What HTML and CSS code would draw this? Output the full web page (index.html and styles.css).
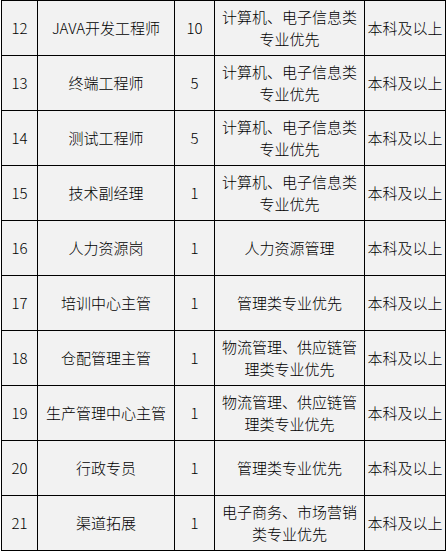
FILE: index.html
```html
<!DOCTYPE html>
<html lang="zh-CN">
<head>
<meta charset="utf-8">
<title>招聘岗位</title>
<link rel="stylesheet" href="styles.css">
</head>
<body>
<table class="jobs">
  <colgroup>
    <col class="c-no">
    <col class="c-title">
    <col class="c-count">
    <col class="c-major">
    <col class="c-edu">
  </colgroup>
  <tbody>
    <tr><td>12</td><td>JAVA开发工程师</td><td>10</td><td>计算机、电子信息类<br>专业优先</td><td>本科及以上</td></tr>
    <tr><td>13</td><td>终端工程师</td><td>5</td><td>计算机、电子信息类<br>专业优先</td><td>本科及以上</td></tr>
    <tr><td>14</td><td>测试工程师</td><td>5</td><td>计算机、电子信息类<br>专业优先</td><td>本科及以上</td></tr>
    <tr><td>15</td><td>技术副经理</td><td>1</td><td>计算机、电子信息类<br>专业优先</td><td>本科及以上</td></tr>
    <tr><td>16</td><td>人力资源岗</td><td>1</td><td>人力资源管理</td><td>本科及以上</td></tr>
    <tr><td>17</td><td>培训中心主管</td><td>1</td><td>管理类专业优先</td><td>本科及以上</td></tr>
    <tr><td>18</td><td>仓配管理主管</td><td>1</td><td>物流管理、供应链管<br>理类专业优先</td><td>本科及以上</td></tr>
    <tr><td>19</td><td>生产管理中心主管</td><td>1</td><td>物流管理、供应链管<br>理类专业优先</td><td>本科及以上</td></tr>
    <tr><td>20</td><td>行政专员</td><td>1</td><td>管理类专业优先</td><td>本科及以上</td></tr>
    <tr><td>21</td><td>渠道拓展</td><td>1</td><td>电子商务、市场营销<br>类专业优先</td><td>本科及以上</td></tr>
  </tbody>
</table>
</body>
</html>
```
FILE: styles.css
```css
html, body {
  margin: 0;
  padding: 0;
  background: #ffffff;
}

body {
  padding: 0 0 0 1px;
}

.jobs {
  border-collapse: collapse;
  table-layout: fixed;
  width: 444px;
  background: #f2f2f2;
  font-family: "Noto Sans CJK SC", "Noto Sans", sans-serif;
  font-size: 15px;
  font-weight: 300;
  line-height: 22px;
  color: #000000;
}

.c-no { width: 36px; }
.c-title { width: 137px; }
.c-count { width: 40px; }
.c-major { width: 150px; }
.c-edu { width: 81px; }

.jobs td {
  border: 1px solid #000000;
  height: 54px;
  padding: 0;
  text-align: center;
  vertical-align: middle;
  white-space: nowrap;
  overflow: hidden;
}
```
